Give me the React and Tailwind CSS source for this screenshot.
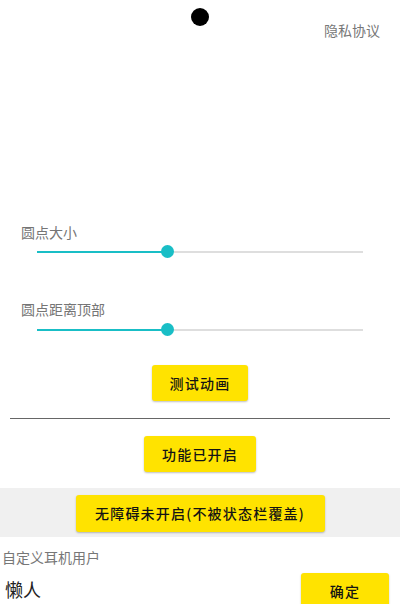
import React from "react";

function Slider({ value }) {
  const pct = value * 100;
  return (
    <div className="relative ml-[37px] w-[326px] h-[18px]">
      <div className="absolute left-0 right-0 top-[9px] h-[2px] bg-[#dedede]" />
      <div
        className="absolute left-0 top-[9px] h-[2px] bg-[#19bec6]"
        style={{ width: `${pct}%` }}
      />
      <div
        className="absolute top-[3px] w-[13px] h-[13px] -ml-[6.5px] rounded-full bg-[#19bec6]"
        style={{ left: `${pct}%` }}
      />
    </div>
  );
}

function YButton({ children, className = "" }) {
  return (
    <div
      className={
        "flex items-center justify-center rounded-[3px] bg-[#ffe300] shadow-[0_1px_2px_rgba(0,0,0,0.25)] text-[14px] font-medium tracking-[1.2px] text-[#141414] " +
        className
      }
    >
      {children}
    </div>
  );
}

export default function App() {
  return (
    <div className="w-[400px] h-[604px] overflow-hidden bg-white font-['Noto_Sans_CJK_SC','Noto_Sans',sans-serif]">
      <div className="grid grid-cols-[1fr_18px_1fr] pt-2 h-[222px]">
        <div />
        <div className="w-[18px] h-[18px] rounded-full bg-black" />
        <div className="justify-self-end pr-5 pt-3 text-[14px] leading-5 text-[#777]">
          隐私协议
        </div>
      </div>

      <div className="pl-[21px] text-[14px] leading-5 text-[#757575]">圆点大小</div>
      <Slider value={0.4} />

      <div className="mt-[39px] pl-[21px] text-[14px] leading-5 text-[#757575]">
        圆点距离顶部
      </div>
      <div className="pt-px">
        <Slider value={0.4} />
      </div>

      <YButton className="mt-[27px] mx-auto w-[96px] h-[36px]">测试动画</YButton>

      <div className="mt-[17px] mx-[10px] h-px bg-[#666]" />

      <YButton className="mt-[17px] mx-auto w-[112px] h-[36px]">功能已开启</YButton>

      <div className="mt-[16px] bg-[#f0f0f0] pt-[7px] pb-[5px]">
        <YButton className="mx-auto w-[249px] h-[37px]">无障碍未开启(不被状态栏覆盖)</YButton>
      </div>

      <div className="mt-[10px] pl-[2px] text-[14px] leading-5 text-[#777]">
        自定义耳机用户
      </div>

      <div className="mt-[6px] flex items-start justify-between">
        <div className="ml-[5px] mt-[4px] text-[18px] leading-[24px] text-[#222]">懒人</div>
        <YButton className="mr-[11px] w-[88px] h-[36px]">确定</YButton>
      </div>
    </div>
  );
}
